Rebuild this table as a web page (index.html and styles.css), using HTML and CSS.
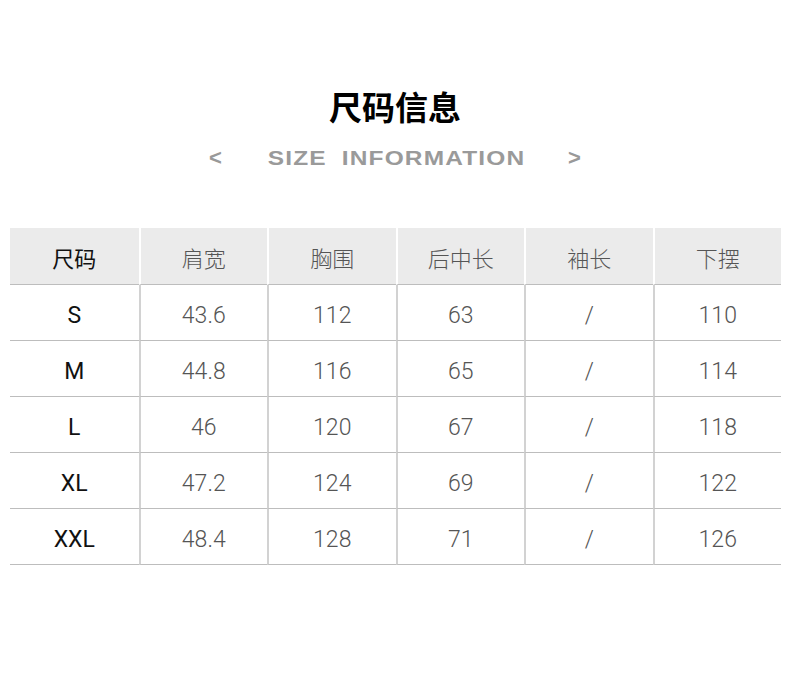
FILE: index.html
```html
<!DOCTYPE html>
<html lang="zh">
<head>
<meta charset="utf-8">
<link rel="stylesheet" href="styles.css">
</head>
<body>
<div class="page">
  <h1 class="title">尺码信息</h1>
  <div class="subtitle"><span class="arrow">&lt;</span><span class="sub-text">SIZE INFORMATION</span><span class="arrow">&gt;</span></div>
  <div class="table">
    <div class="cell head first">尺码</div>
    <div class="cell head">肩宽</div>
    <div class="cell head">胸围</div>
    <div class="cell head">后中长</div>
    <div class="cell head">袖长</div>
    <div class="cell head">下摆</div>

    <div class="cell size">S</div><div class="cell">43.6</div><div class="cell">112</div><div class="cell">63</div><div class="cell">/</div><div class="cell">110</div>
    <div class="cell size">M</div><div class="cell">44.8</div><div class="cell">116</div><div class="cell">65</div><div class="cell">/</div><div class="cell">114</div>
    <div class="cell size">L</div><div class="cell">46</div><div class="cell">120</div><div class="cell">67</div><div class="cell">/</div><div class="cell">118</div>
    <div class="cell size">XL</div><div class="cell">47.2</div><div class="cell">124</div><div class="cell">69</div><div class="cell">/</div><div class="cell">122</div>
    <div class="cell size">XXL</div><div class="cell">48.4</div><div class="cell">128</div><div class="cell">71</div><div class="cell">/</div><div class="cell">126</div>
  </div>
</div>
</body>
</html>
```
FILE: styles.css
```css
html, body {
  margin: 0;
  padding: 0;
  background: #fff;
}
.page {
  width: 790px;
  height: 689px;
  padding-top: 83px;
  box-sizing: border-box;
  font-family: "Noto Sans CJK SC", "Noto Sans", sans-serif;
}
.title {
  margin: 0;
  text-align: center;
  font-size: 33px;
  line-height: 46px;
  font-weight: 700;
  color: #000;
}
.subtitle {
  margin-top: 17px;
  display: flex;
  justify-content: center;
  align-items: center;
  font-family: "Liberation Sans", Arial, sans-serif;
  font-weight: 700;
  color: #9a9a9a;
  height: 24px;
}
.arrow {
  font-size: 22px;
  font-weight: 700;
  color: #999;
}
.sub-text {
  font-size: 21px;
  letter-spacing: 1px;
  word-spacing: 6px;
  margin: 0 61px 0 64px;
  transform: scaleX(1.165);
}
.table {
  margin: 58px 9px 0 10px;
  display: grid;
  grid-template-columns: repeat(6, 1fr);
  grid-template-rows: 57px repeat(5, 56px);
}
.cell {
  display: flex;
  align-items: center;
  justify-content: center;
  padding-top: 5px;
  font-size: 23px;
  font-weight: 300;
  color: #555;
  border-bottom: 1px solid #bdbdbd;
  border-left: 2px solid #d2d2d2;
  font-family: Roboto, "Noto Sans", "Noto Sans CJK SC", sans-serif;
}
.cell.head {
  padding-top: 2px;
  background: #ebebeb;
  border-left: 2px solid #fff;
  font-size: 22px;
  font-family: "Noto Sans CJK SC", sans-serif;
  color: #555;
}
.cell.head.first {
  color: #111;
  font-weight: 400;
}
.cell.head:first-child,
.cell.size {
  border-left: none;
}
.cell.size {
  color: #111;
  font-weight: 400;
}
```
